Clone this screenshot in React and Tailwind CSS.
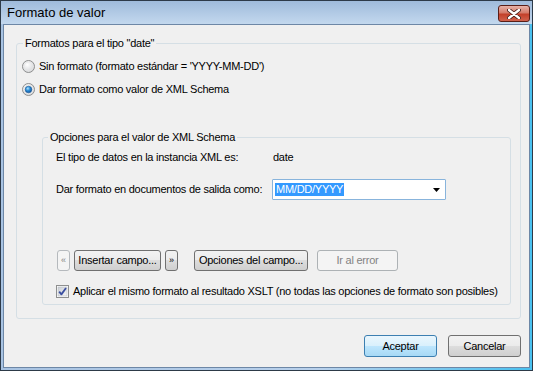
import React from "react";

const btn =
  "h-[21px] flex items-center justify-center rounded-[3px] border border-[#707070] bg-[linear-gradient(#f2f2f2_0%,#ebebeb_50%,#dddddd_50%,#cfcfcf_100%)] text-black whitespace-nowrap";

function Radio({ checked }) {
  return (
    <svg width="13" height="13" viewBox="0 0 13 13" className="shrink-0">
      <defs>
        <radialGradient id={checked ? "rgc" : "rgu"} cx="40%" cy="35%" r="70%">
          <stop offset="0%" stopColor="#ffffff" />
          <stop offset="100%" stopColor="#cfd1d4" />
        </radialGradient>
        <radialGradient id="dot" cx="40%" cy="35%" r="70%">
          <stop offset="0%" stopColor="#b5e4fb" />
          <stop offset="45%" stopColor="#2d8fd8" />
          <stop offset="100%" stopColor="#0d4f97" />
        </radialGradient>
      </defs>
      <circle cx="6.5" cy="6.5" r="6" fill={`url(#${checked ? "rgc" : "rgu"})`} stroke="#8e8f8f" />
      <circle cx="6.5" cy="6.5" r="4.5" fill="none" stroke="#e6e6e6" strokeWidth="0.8" />
      {checked && <circle cx="6.5" cy="6.5" r="3.3" fill="url(#dot)" stroke="#1d5a98" strokeWidth="0.6" />}
    </svg>
  );
}

function Checkbox() {
  return (
    <svg width="13" height="13" viewBox="0 0 13 13" className="shrink-0">
      <defs>
        <linearGradient id="cbg" x1="0" y1="0" x2="1" y2="1">
          <stop offset="0%" stopColor="#cbcfd5" />
          <stop offset="100%" stopColor="#f6f6f6" />
        </linearGradient>
      </defs>
      <rect x="0.5" y="0.5" width="12" height="12" fill="#ffffff" stroke="#8e8f8f" />
      <rect x="2" y="2" width="9" height="9" fill="url(#cbg)" stroke="#b7bcc3" strokeWidth="0.6" />
      <path d="M3.2 6.6 L5.4 9.4 L10 3" fill="none" stroke="#3b4fa0" strokeWidth="1.8" strokeLinejoin="round" />
    </svg>
  );
}

export default function App() {
  return (
    <div className="w-[533px] h-[371px] flex flex-col border border-[#2d3a48] bg-[linear-gradient(90deg,#a8c3e2_0%,#b9d1ec_60%,#49c1f0_100%)] font-['Liberation_Sans',sans-serif] text-[11px] tracking-[-0.25px] text-black leading-[13px] overflow-hidden whitespace-nowrap">
      {/* Title bar */}
      <div className="h-[23px] shrink-0 flex items-start pl-[6px] pr-[2px] bg-[linear-gradient(#9fbbdb,#c3d8ee)]">
        <span className="text-[13px] tracking-normal leading-[24px] text-black flex-1">Formato de valor</span>
        <div className="mt-[4px] w-[32px] h-[17px] rounded-[3px] border border-[#5a1e17] bg-[linear-gradient(#e8b3a9_0%,#d47b6a_45%,#c3402a_55%,#d0624d_100%)] flex items-center justify-center">
          <svg width="14" height="10" viewBox="0 0 14 10">
            <path d="M2 1 L12 9 M12 1 L2 9" stroke="#3d1a16" strokeWidth="4" strokeLinecap="round" />
            <path d="M2 1 L12 9 M12 1 L2 9" stroke="#ffffff" strokeWidth="2.4" strokeLinecap="round" />
          </svg>
        </div>
      </div>

      {/* Frame + client */}
      <div className="flex-1 flex px-[2px] pb-[2px]">
        <div className="flex-1 flex flex-col border border-[#6d87a6] bg-[#f0f0f0]">
          {/* Outer group */}
          <div className="mt-[18px] ml-[12px] w-[505px] h-[276px] shrink-0 flex flex-col border border-[#d5dfe5] rounded-[3px]">
            <span className="-mt-[7px] ml-[6px] px-[2px] w-fit bg-[#f0f0f0] leading-[13px]">Formatos para el tipo "date"</span>

            <div className="mt-[8px] ml-[5px] h-[16px] flex items-center gap-[4px]">
              <Radio checked={false} />
              <span>Sin formato (formato estándar = 'YYYY-MM-DD')</span>
            </div>
            <div className="mt-[7px] ml-[5px] h-[16px] flex items-center gap-[4px]">
              <Radio checked />
              <span>Dar formato como valor de XML Schema</span>
            </div>

            {/* Inner group */}
            <div className="mt-[40px] ml-[25px] w-[469px] h-[168px] shrink-0 flex flex-col border border-[#d5dfe5] rounded-[3px]">
              <span className="-mt-[7px] ml-[5px] px-[2px] w-fit bg-[#f0f0f0] leading-[13px]">Opciones para el valor de XML Schema</span>

              <div className="mt-[5px] ml-[13px] h-[16px] flex items-center">
                <span className="w-[216px] shrink-0">El tipo de datos en la instancia XML es:</span>
                <span className="ml-[1px]">date</span>
              </div>

              <div className="mt-[14px] ml-[13px] h-[21px] flex items-center">
                <span className="w-[216px] shrink-0">Dar formato en documentos de salida como:</span>
                <div className="w-[174px] h-[21px] flex items-center border border-[#88b4dc] bg-white rounded-[1px]">
                  <span className="ml-[2px] px-[1px] bg-[#3399ff] text-white leading-[13px]">MM/DD/YYYY</span>
                  <span className="flex-1" />
                  <svg width="7" height="4" viewBox="0 0 7 4" className="mr-[5px]">
                    <path d="M0 0 H7 L3.5 4 Z" fill="#000" />
                  </svg>
                </div>
              </div>

              <div className="mt-[50px] ml-[14px] flex items-center">
                <div className="h-[21px] w-[13px] flex items-center justify-center rounded-[3px] border border-[#b5b9bd] text-[#838383] bg-[#f4f4f4]">
                  <span className="text-[9px]">«</span>
                </div>
                <div className={`${btn} ml-[4px] w-[87px]`}>Insertar campo...</div>
                <div className={`${btn} ml-[4px] w-[13px]`}>
                  <span className="text-[9px]">»</span>
                </div>
                <div className={`${btn} ml-[16px] w-[114px]`}>Opciones del campo...</div>
                <div className="ml-[9px] w-[81px] h-[21px] flex items-center justify-center rounded-[3px] border border-[#adb2b5] bg-[#f4f4f4] text-[#838383]">
                  Ir al error
                </div>
              </div>

              <div className="mt-[12px] ml-[13px] h-[16px] flex items-center gap-[4px]">
                <Checkbox />
                <span>Aplicar el mismo formato al resultado XSLT (no todas las opciones de formato son posibles)</span>
              </div>
            </div>
          </div>

          {/* Bottom buttons */}
          <div className="mt-[16px] mr-[8px] flex justify-end gap-[11px]">
            <div className="w-[73px] h-[22px] flex items-center justify-center rounded-[3px] border border-[#3c7fb1] bg-[linear-gradient(#eaf6fd_0%,#d9f0fc_50%,#bee6fd_50%,#a7d9f5_100%)]">
              Aceptar
            </div>
            <div className={`${btn} w-[73px] h-[22px]`}>Cancelar</div>
          </div>
        </div>
      </div>
    </div>
  );
}
